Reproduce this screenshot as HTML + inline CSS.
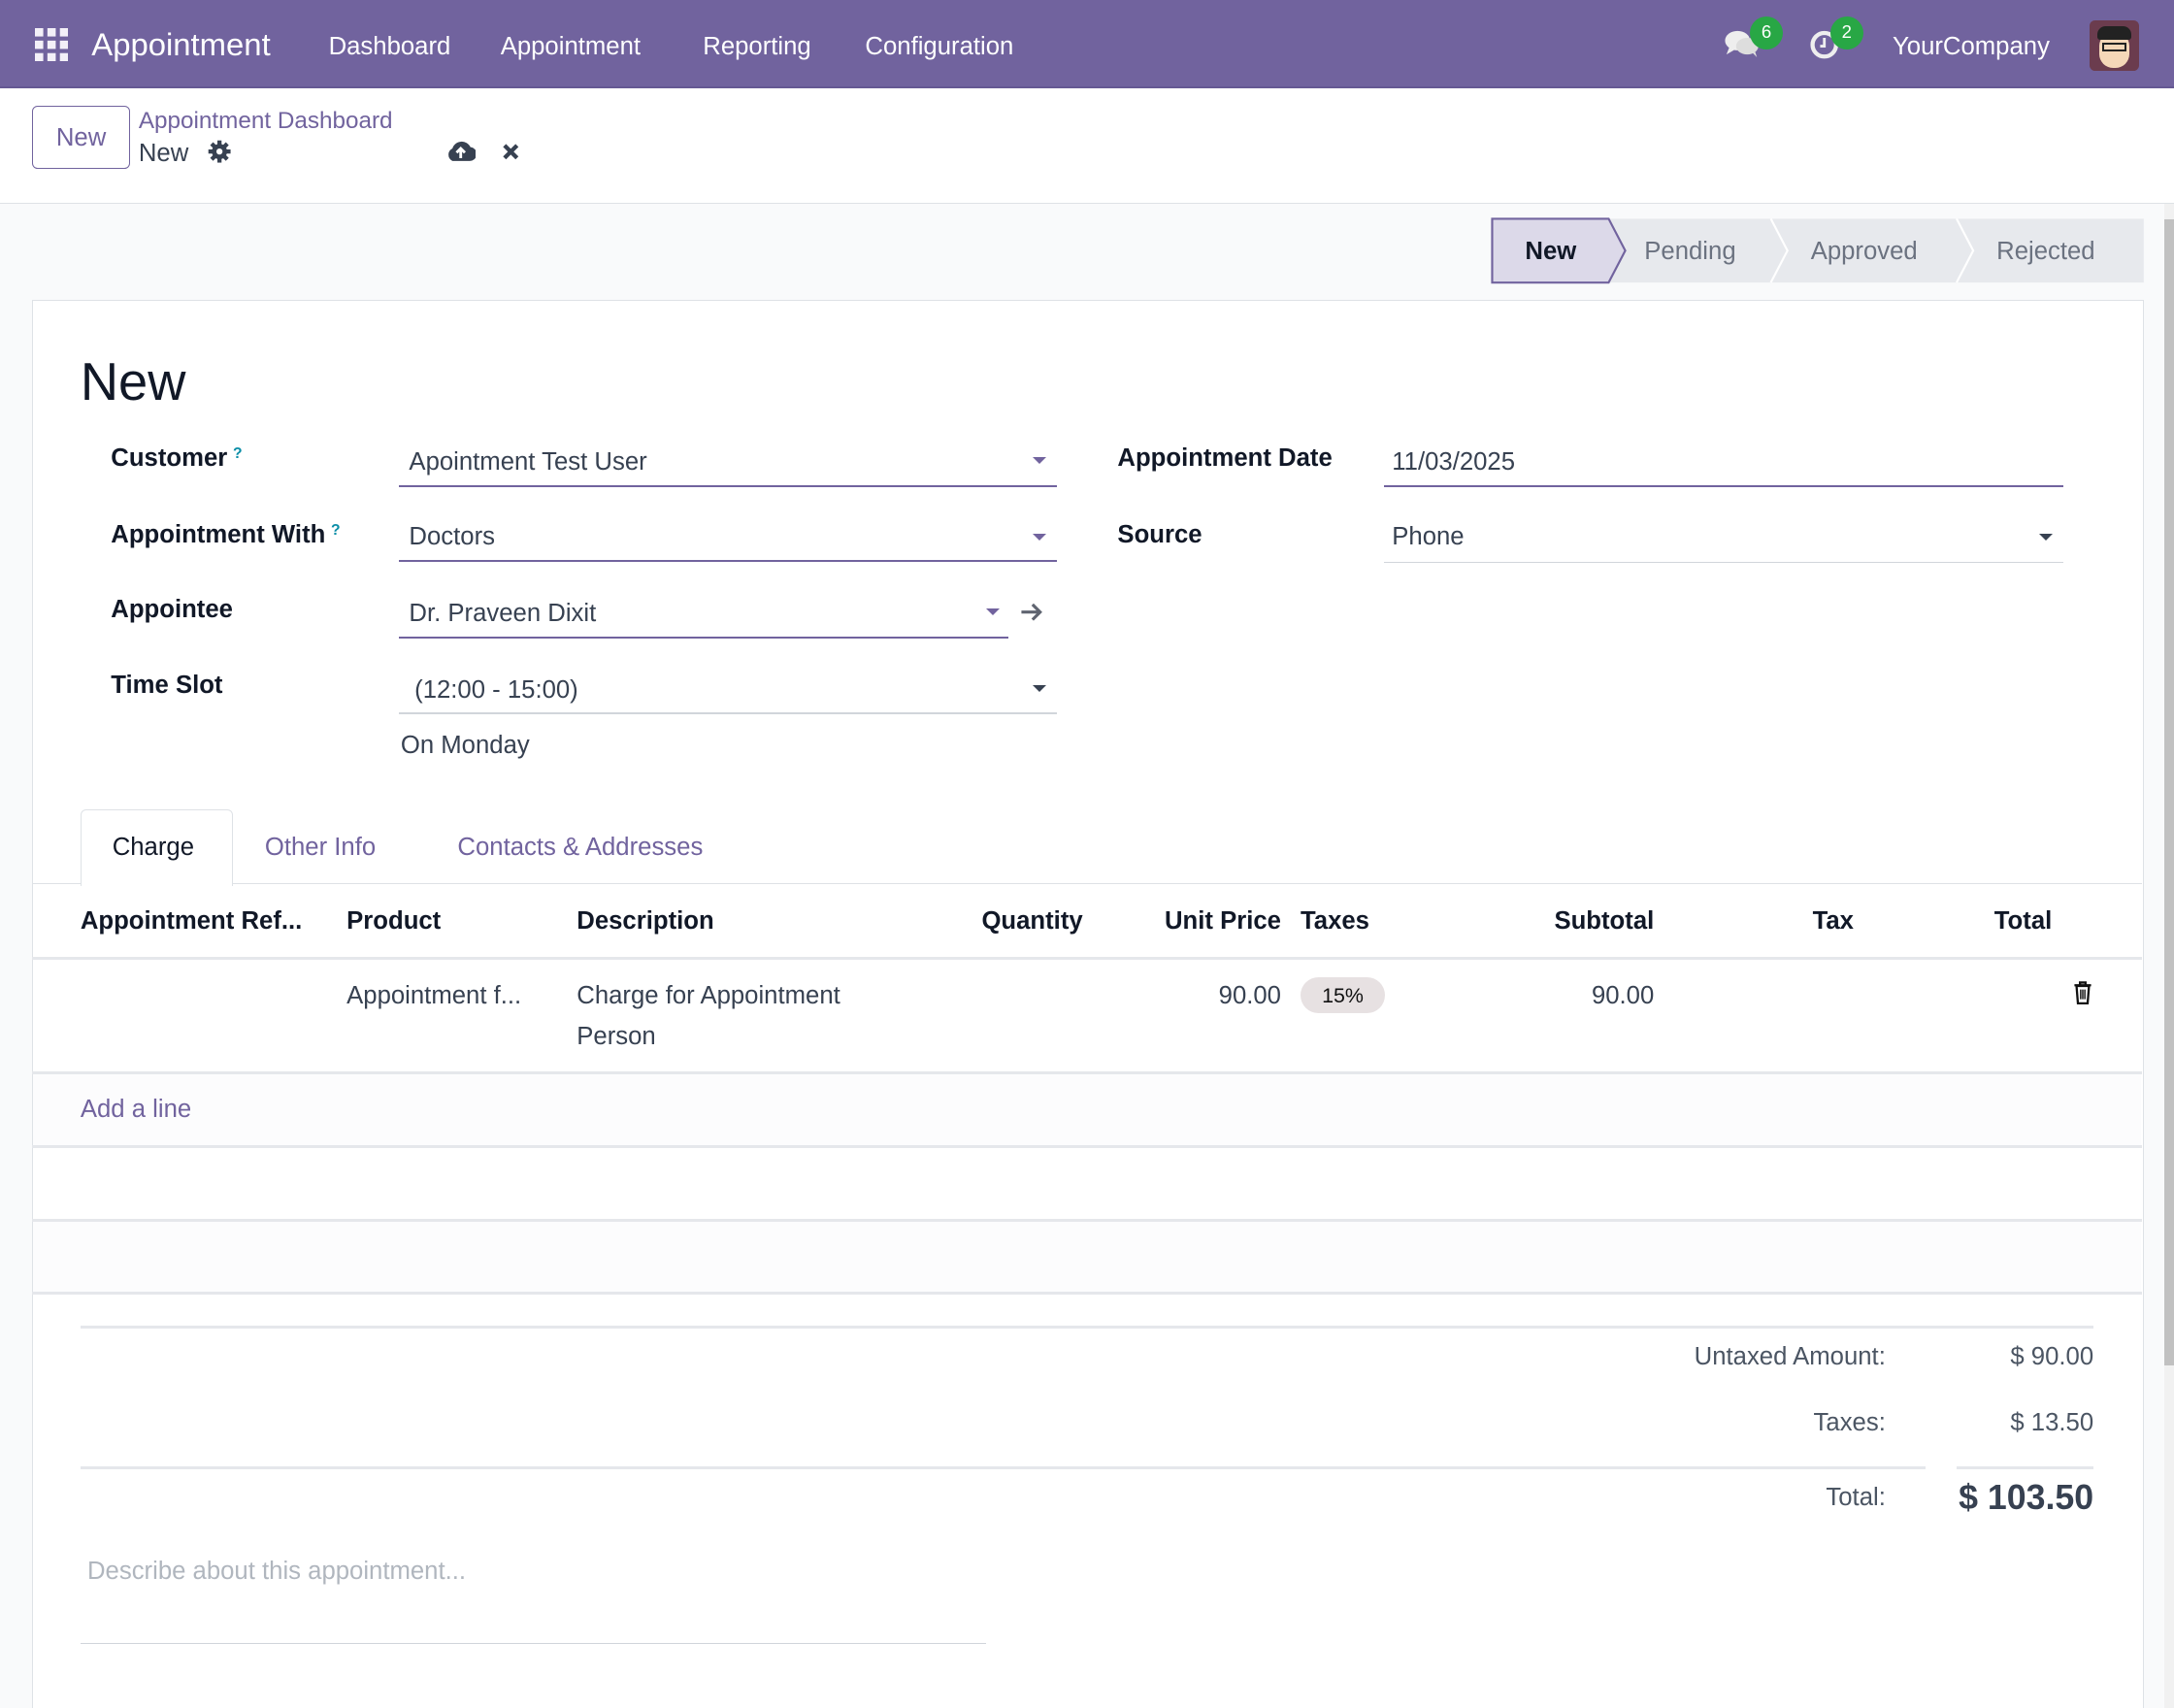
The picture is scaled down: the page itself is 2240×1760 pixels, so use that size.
<!DOCTYPE html>
<html><head><meta charset="utf-8"><style>
*{margin:0;padding:0;box-sizing:border-box}
html,body{width:2240px;height:1760px;overflow:hidden;background:#f9fafb}
#w{zoom:1.4285714;width:1568px;height:1232px;position:relative;font-family:"Liberation Sans",sans-serif;color:#374151;font-size:18px}
.a{position:absolute;white-space:nowrap;line-height:1}
.t{margin-top:2px}
.lb{font-weight:bold;color:#111827;font-size:18px}
.q{color:#0b8ea7;font-size:11px;font-weight:bold;vertical-align:top;margin-left:4px}
.ul{position:absolute;height:1px}
.car{position:absolute;width:0;height:0;border-left:5px solid transparent;border-right:5px solid transparent;border-top:5px solid #71639e}
.th{font-weight:bold;color:#111827}
.hl{position:absolute;left:23px;width:1522px;height:1px;background:#e5e7eb}
</style></head><body><div id="w">
<div class="a" style="left:0;top:0;width:1568px;height:64px;background:#71639e;border-bottom:2px solid #655893"></div>
<svg class="a" style="left:25px;top:20px" width="24" height="24" viewBox="0 0 24 24" fill="#f3f0f8"><rect x="0" y="0" width="6" height="6"/><rect x="9" y="0" width="6" height="6"/><rect x="18" y="0" width="6" height="6"/><rect x="0" y="9" width="6" height="6"/><rect x="9" y="9" width="6" height="6"/><rect x="18" y="9" width="6" height="6"/><rect x="0" y="18" width="6" height="6"/><rect x="9" y="18" width="6" height="6"/><rect x="18" y="18" width="6" height="6"/></svg>
<div class="a t" style="left:66px;top:19px;font-size:23px;color:#fff">Appointment</div>
<div class="a t" style="left:237px;top:23px;color:#fff">Dashboard</div>
<div class="a t" style="left:361px;top:23px;color:#fff">Appointment</div>
<div class="a t" style="left:507px;top:23px;color:#fff">Reporting</div>
<div class="a t" style="left:624px;top:23px;color:#fff">Configuration</div>
<svg class="a" style="left:1243px;top:20px" width="28" height="22" viewBox="0 0 28 22"><ellipse cx="10" cy="9" rx="9" ry="7" fill="#eee"/><path d="M4 14 L2 19 L9 15Z" fill="#eee"/><ellipse cx="17" cy="13" rx="8" ry="6" fill="#ddd"/><path d="M20 17 L24 21 L22 15Z" fill="#ddd"/></svg>
<div class="a" style="left:1262px;top:12px;width:24px;height:24px;border-radius:12px;background:#28a745;color:#fff;font-size:13px;text-align:center;line-height:22px">6</div>
<svg class="a" style="left:1305px;top:20px" width="24" height="24" viewBox="0 0 24 24"><circle cx="11" cy="12" r="8.5" fill="none" stroke="#eee" stroke-width="3"/><path d="M11 7v6h-3" stroke="#eee" stroke-width="2" fill="none"/></svg>
<div class="a" style="left:1320px;top:12px;width:24px;height:24px;border-radius:12px;background:#28a745;color:#fff;font-size:13px;text-align:center;line-height:22px">2</div>
<div class="a t" style="left:1365px;top:23px;color:#fff">YourCompany</div>
<div class="a" style="left:1507px;top:15px;width:36px;height:36px;border-radius:4px;background:#6b3c4e;overflow:hidden"><div style="position:absolute;left:7px;top:8px;width:22px;height:26px;border-radius:10px;background:#f5d7b8"></div><div style="position:absolute;left:6px;top:4px;width:24px;height:10px;border-radius:6px 6px 2px 2px;background:#222"></div><div style="position:absolute;left:9px;top:16px;width:18px;height:6px;border:2px solid #222"></div></div>
<div class="a" style="left:0;top:64px;width:1568px;height:83px;background:#fff;border-bottom:1px solid #dee2e6"></div>
<div class="a" style="left:23px;top:76px;width:71px;height:46px;border:1px solid #71639e;border-radius:4px;color:#71639e;text-align:center;line-height:46px">New</div>
<div class="a t" style="left:100px;top:77px;color:#71639e;font-size:17px">Appointment Dashboard</div>
<div class="a t" style="left:100px;top:100px;color:#374151">New</div>
<svg class="a" style="left:150px;top:101px" width="17" height="17" viewBox="0 0 17 17"><g fill="#374151"><circle cx="8.5" cy="8.5" r="5.5"/><rect x="7" y="0.5" width="3" height="16"/><rect x="0.5" y="7" width="16" height="3"/><rect x="7" y="0.5" width="3" height="16" transform="rotate(45 8.5 8.5)"/><rect x="7" y="0.5" width="3" height="16" transform="rotate(-45 8.5 8.5)"/></g><circle cx="8.5" cy="8.5" r="2.2" fill="#fff"/></svg>
<svg class="a" style="left:321px;top:100px" width="22" height="18" viewBox="0 0 22 18"><path d="M5 16 A5 5 0 0 1 5 7 A7 7 0 0 1 18 6 A5 5 0 0 1 17 16Z" fill="#374151"/><path d="M11 14V8M8 10l3-3 3 3" stroke="#fff" stroke-width="2" fill="none"/></svg>
<svg class="a" style="left:362px;top:103px" width="13" height="13" viewBox="0 0 13 13"><path d="M2 2L11 11M11 2L2 11" stroke="#374151" stroke-width="3"/></svg>
<div class="a" style="left:1561px;top:147px;width:7px;height:1085px;background:#f1f1f1"></div>
<div class="a" style="left:1561px;top:158px;width:7px;height:827px;background:#c1c1c1"></div>
<svg class="a" style="left:1075px;top:157px" width="472" height="48" viewBox="0 0 472 48">
<rect x="1" y="1" width="470" height="46" fill="#e7e9ed"/>
<path d="M1 1H85L97 24L85 47H1Z" fill="#dcd9e9" stroke="#71639e" stroke-width="1.5"/>
<path d="M202 1L214 24L202 47" stroke="#fff" stroke-width="1.5" fill="none"/>
<path d="M336 1L348 24L336 47" stroke="#fff" stroke-width="1.5" fill="none"/>
</svg>
<div class="a th t" style="left:1100px;top:171px">New</div>
<div class="a t" style="left:1186px;top:171px;color:#6b7280">Pending</div>
<div class="a t" style="left:1306px;top:171px;color:#6b7280">Approved</div>
<div class="a t" style="left:1440px;top:171px;color:#6b7280">Rejected</div>
<div class="a" style="left:23px;top:216px;width:1523px;height:1030px;background:#fff;border:1px solid #dee2e6"></div>
<div class="a t" style="left:58px;top:255px;font-size:38px;font-weight:500;color:#111827">New</div>
<div class="a lb t" style="left:80px;top:320px">Customer<span class="q">?</span></div>
<div class="a lb t" style="left:80px;top:375px">Appointment With<span class="q">?</span></div>
<div class="a lb t" style="left:80px;top:429px">Appointee</div>
<div class="a lb t" style="left:80px;top:484px">Time Slot</div>
<div class="a t" style="left:295px;top:323px">Apointment Test User</div>
<div class="ul" style="left:288px;top:350px;width:474px;background:#71639e;height:1.5px"></div><div class="car" style="left:745px;top:330px"></div>
<div class="a t" style="left:295px;top:377px">Doctors</div>
<div class="ul" style="left:288px;top:404px;width:474px;background:#71639e;height:1.5px"></div><div class="car" style="left:745px;top:385px"></div>
<div class="a t" style="left:295px;top:432px">Dr. Praveen Dixit</div>
<div class="ul" style="left:288px;top:459px;width:439px;background:#71639e;height:1.5px"></div><div class="car" style="left:711px;top:439px"></div>
<svg class="a" style="left:736px;top:434px" width="17" height="15" viewBox="0 0 17 15"><path d="M1 7.5H14M9 2l5.5 5.5L9 13" stroke="#5f6470" stroke-width="2.2" fill="none"/></svg>
<div class="a t" style="left:299px;top:487px">(12:00 - 15:00)</div>
<div class="ul" style="left:288px;top:514px;width:474px;background:#d1d5db"></div><div class="car" style="left:745px;top:494px;border-top-color:#374151"></div>
<div class="a t" style="left:289px;top:527px">On Monday</div>
<div class="a lb t" style="left:806px;top:320px">Appointment Date</div>
<div class="a lb t" style="left:806px;top:375px">Source</div>
<div class="a t" style="left:1004px;top:323px">11/03/2025</div>
<div class="ul" style="left:998px;top:350px;width:490px;background:#71639e;height:1.5px"></div>
<div class="a t" style="left:1004px;top:377px">Phone</div>
<div class="ul" style="left:998px;top:405px;width:490px;background:#d1d5db"></div><div class="car" style="left:1471px;top:385px;border-top-color:#374151"></div>
<div class="hl" style="top:637px;background:#dee2e6"></div>
<div class="a" style="left:58px;top:584px;width:110px;height:55px;background:#fff;border:1px solid #dee2e6;border-bottom:none;border-radius:4px 4px 0 0"></div>
<div class="a t" style="left:81px;top:601px;color:#111827">Charge</div>
<div class="a t" style="left:191px;top:601px;color:#71639e">Other Info</div>
<div class="a t" style="left:330px;top:601px;color:#71639e">Contacts &amp; Addresses</div>
<div class="a th t" style="left:58px;top:654px">Appointment Ref...</div>
<div class="a th t" style="left:250px;top:654px">Product</div>
<div class="a th t" style="left:416px;top:654px">Description</div>
<div class="a th t" style="left:681px;top:654px;width:100px;text-align:right">Quantity</div>
<div class="a th t" style="left:804px;top:654px;width:120px;text-align:right">Unit Price</div>
<div class="a th t" style="left:938px;top:654px">Taxes</div>
<div class="a th t" style="left:1073px;top:654px;width:120px;text-align:right">Subtotal</div>
<div class="a th t" style="left:1237px;top:654px;width:100px;text-align:right">Tax</div>
<div class="a th t" style="left:1380px;top:654px;width:100px;text-align:right">Total</div>
<div class="hl" style="top:690px;height:2px"></div>
<div class="a t" style="left:250px;top:708px">Appointment f...</div>
<div class="a t" style="left:416px;top:708px">Charge for Appointment</div>
<div class="a t" style="left:416px;top:737px">Person</div>
<div class="a t" style="left:824px;top:708px;width:100px;text-align:right">90.00</div>
<div class="a" style="left:938px;top:705px;width:61px;height:26px;border-radius:13px;background:#e7e1e2;font-size:15px;text-align:center;line-height:27px;color:#111">15%</div>
<div class="a t" style="left:1093px;top:708px;width:100px;text-align:right">90.00</div>
<svg class="a" style="left:1495px;top:708px" width="14" height="17" viewBox="0 0 14 17"><path d="M1 3H13M5 3V1H9V3M2.5 3.5L3.5 16H10.5L11.5 3.5Z" stroke="#111" stroke-width="1.6" fill="none"/><path d="M5.5 6V13M7 6V13M8.5 6V13" stroke="#111" stroke-width="1"/></svg>
<div class="hl" style="top:773px;height:2px"></div>
<div class="a" style="left:24px;top:775px;width:1520px;height:51px;background:#fcfcfd"></div>
<div class="a t" style="left:58px;top:790px;color:#71639e">Add a line</div>
<div class="hl" style="top:826px;height:2px"></div>
<div class="hl" style="top:879px;height:2px"></div>
<div class="a" style="left:24px;top:881px;width:1520px;height:51px;background:#fcfcfd"></div>
<div class="hl" style="top:932px;height:2px"></div>
<div class="ul" style="left:58px;top:956px;width:1452px;background:#e5e7eb;height:2px"></div>
<div class="a t" style="left:1100px;top:968px;width:260px;text-align:right;color:#4b5563">Untaxed Amount:</div>
<div class="a t" style="left:1400px;top:968px;width:110px;text-align:right;color:#4b5563">$ 90.00</div>
<div class="a t" style="left:1100px;top:1016px;width:260px;text-align:right;color:#4b5563">Taxes:</div>
<div class="a t" style="left:1400px;top:1016px;width:110px;text-align:right;color:#4b5563">$ 13.50</div>
<div class="ul" style="left:58px;top:1058px;width:1331px;background:#e5e7eb;height:2px"></div>
<div class="ul" style="left:1411px;top:1058px;width:99px;background:#e5e7eb;height:2px"></div>
<div class="a t" style="left:1100px;top:1070px;width:260px;text-align:right;color:#4b5563">Total:</div>
<div class="a t" style="left:1380px;top:1066px;width:130px;text-align:right;font-size:25px;font-weight:bold;color:#374151">$ 103.50</div>
<div class="a t" style="left:63px;top:1123px;color:#b0b6be">Describe about this appointment...</div>
<div class="ul" style="left:58px;top:1185px;width:653px;background:#d1d5db"></div>
</div></body></html>
